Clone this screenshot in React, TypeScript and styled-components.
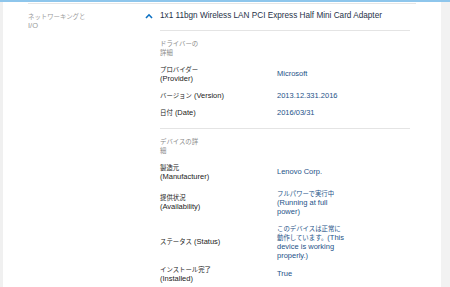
import * as React from 'react';
import styled, { createGlobalStyle } from 'styled-components';

const GlobalStyle = createGlobalStyle`
  html, body {
    margin: 0;
    padding: 0;
    background: #ffffff;
  }
  body {
    font-family: 'Liberation Sans', 'Noto Sans CJK JP', sans-serif;
    font-size: 7.5px;
    line-height: 9px;
    color: #2a2a2a;
  }
`;

// 화면 전체: 좌측 얇은 여백, 본문, 우측 회색 레일
const Page = styled.div`
  display: grid;
  grid-template-columns: 3px 1fr 9px;
  min-height: 287px;
  border-top: 2px solid #8ec6ec;
`;

const Gutter = styled.div`
  background-color: #f0f0f0;
`;

const Rail = styled.div`
  background-color: #f2f2f2;
`;

const Main = styled.div`
  padding: 1px 25px 0 25px;
`;

// 카테고리 한 줄 (네트워킹 등)
const CategoryRow = styled.div`
  display: flex;
  border-top: 1px solid #e6e6e6;
`;

const CategoryName = styled.div`
  flex: 0 0 117px;
  padding-top: 7.5px;
  color: #9a9a9a;
`;

const CategoryText = styled.div`
  width: 58px;
`;

const Device = styled.div`
  flex: 1;
  padding-right: 6px;
`;

const DeviceHeader = styled.div`
  display: flex;
  align-items: center;
  gap: 7px;
  padding: 7px 0 9px;
`;

const Chevron = styled.svg`
  width: 8px;
  height: 6px;
  flex: none;
`;

const DeviceTitle = styled.div`
  font-size: 8.2px;
  line-height: 10px;
  color: #1f3248;
`;

const Details = styled.div`
  margin-left: 15px;
`;

const Section = styled.div`
  border-top: 1px solid #e4e4e4;
  padding: 7.5px 0 7.5px;
`;

const SectionTitle = styled.div`
  width: 40px;
  color: #8a8a8a;
  margin-bottom: 4px;
`;

const Row = styled.div<{ $tight?: boolean }>`
  display: grid;
  grid-template-columns: 117px 80px;
  align-items: center;
  padding: ${(p) => (p.$tight ? '1px 0 4px' : '4px 0')};
`;

const Label = styled.div`
  width: 66px;
  color: #222222;
`;

const Value = styled.div`
  color: #1d5288;
`;

// 값의 한 줄
const ValueLine = styled.div`
  white-space: nowrap;
`;

// 일본어 글자는 살짝 작게
const Ja = styled.span`
  font-size: 6.4px;
`;

// 값 한 줄: [일본어, 영어]
type Line = [string, string];
type Item = { ja: string; en: string; lines: Line[]; tight?: boolean };

const driver: Item[] = [
  { ja: 'プロバイダー', en: '(Provider)', lines: [['', 'Microsoft']] },
  { ja: 'バージョン', en: '(Version)', lines: [['', '2013.12.331.2016']] },
  { ja: '日付', en: '(Date)', lines: [['', '2016/03/31']] },
];

const device: Item[] = [
  { ja: '製造元', en: '(Manufacturer)', lines: [['', 'Lenovo Corp.']] },
  {
    ja: '提供状況',
    en: '(Availability)',
    lines: [
      ['フルパワーで実行中', ''],
      ['', '(Running at full'],
      ['', 'power)'],
    ],
  },
  {
    ja: 'ステータス',
    en: '(Status)',
    lines: [
      ['このデバイスは正常に', ''],
      ['動作しています。', '(This'],
      ['', 'device is working'],
      ['', 'properly.)'],
    ],
  },
  { ja: 'インストール完了', en: '(Installed)', lines: [['', 'True']], tight: true },
];

function InfoRow({ item }: { item: Item }) {
  return (
    <Row $tight={item.tight}>
      <Label>
        <Ja>{item.ja}</Ja> {item.en}
      </Label>
      <Value>
        {item.lines.map(([ja, en], i) => (
          <ValueLine key={i}>
            {ja && <Ja>{ja}</Ja>}
            {en}
          </ValueLine>
        ))}
      </Value>
    </Row>
  );
}

export default function App() {
  return (
    <>
      <GlobalStyle />
      <Page>
        <Gutter />
        <Main>
          <CategoryRow>
            <CategoryName>
              <CategoryText>
                <Ja>ネットワーキングと</Ja> I/O
              </CategoryText>
            </CategoryName>
            <Device>
              <DeviceHeader>
                <Chevron viewBox="0 0 8 6">
                  <polyline points="1,5 4,1.8 7,5" fill="none" stroke="#0a6fc2" strokeWidth="1.6" />
                </Chevron>
                <DeviceTitle>1x1 11bgn Wireless LAN PCI Express Half Mini Card Adapter</DeviceTitle>
              </DeviceHeader>
              <Details>
                <Section>
                  <SectionTitle>
                    <Ja>ドライバーの詳細</Ja>
                  </SectionTitle>
                  {driver.map((d) => (
                    <InfoRow key={d.en} item={d} />
                  ))}
                </Section>
                <Section>
                  <SectionTitle>
                    <Ja>デバイスの詳細</Ja>
                  </SectionTitle>
                  {device.map((d) => (
                    <InfoRow key={d.en} item={d} />
                  ))}
                </Section>
              </Details>
            </Device>
          </CategoryRow>
        </Main>
        <Rail />
      </Page>
    </>
  );
}
